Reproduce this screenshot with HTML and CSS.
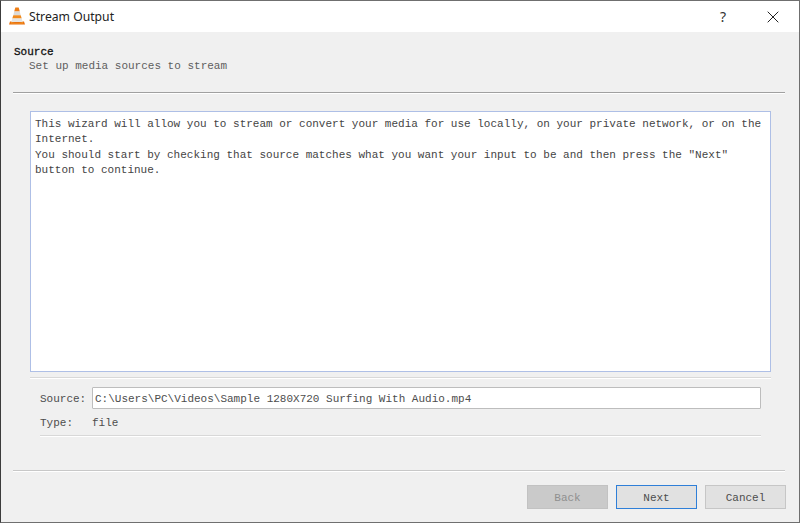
FILE: index.html
```html
<!DOCTYPE html>
<html lang="en">
<head>
    <meta charset="UTF-8">
    <title>Stream Output</title>
    <link rel="stylesheet" href="styles.css">
</head>
<body>
    <div class="window">
        <div class="titlebar">
            <svg class="app-icon" width="16" height="18" viewBox="0 0 16 18">
                <path d="M1 14.5h14l1 3H0z" fill="#e8710f"/>
                <path d="M6.300 .6h3.400l1.100 4H5.200z" fill="#ee7d14"/>
                <path d="M5.200 4.600h5.600l.9 3.600H4.300z" fill="#dcdad6"/>
                <path d="M4.300 8.200h7.400l1 3.300H3.300z" fill="#f08a1d"/>
                <path d="M3.300 11.500h9.400l1 3.500H2.300z" fill="#e6e4e0"/>
                <path d="M2.300 15c2 1.300 9.400 1.300 11.400 0l.6 1.500H1.700z" fill="#f59a2c"/>
            </svg>
            <span class="title">Stream Output</span>
            <span class="help">?</span>
            <svg class="close" width="12" height="12" viewBox="0 0 12 12">
                <path d="M.7 .7l10.600 10.600M11.300 .7L.7 11.300" stroke="#222" stroke-width="1" fill="none"/>
            </svg>
        </div>

        <div class="content">
            <div class="header">
                <h1>Source</h1>
                <p>Set up media sources to stream</p>
            </div>
            <div class="rule rule-dark"></div>

            <div class="page">
                <div class="intro">
                    This wizard will allow you to stream or convert your media for use locally, on your private network, or on the Internet.<br>
                    You should start by checking that source matches what you want your input to be and then press the "Next" button to continue.
                </div>
                <div class="rule rule-light rule-first"></div>

                <div class="source-info">
                    <div class="field">
                        <label for="source">Source:</label>
                        <input type="text" id="source" value="C:\Users\PC\Videos\Sample 1280X720 Surfing With Audio.mp4">
                    </div>
                    <div class="field field-type">
                        <span class="label">Type:</span>
                        <span>file</span>
                    </div>
                    <div class="rule rule-light"></div>
                </div>
            </div>

            <div class="rule rule-mid rule-bottom"></div>

            <div class="buttons">
                <button disabled>Back</button>
                <button class="default">Next</button>
                <button>Cancel</button>
            </div>
        </div>
    </div>
</body>
</html>
```

FILE: styles.css
```css
* {
    box-sizing: border-box;
}
body {
    margin: 0;
    background-color: #f0f0f0;
}
.window {
    width: 800px;
    height: 523px;
    display: flex;
    flex-direction: column;
    border: 1px solid #6f6f6f;
    border-left-color: #3c3c3c;
    background-color: #f0f0f0;
    font-family: "Liberation Mono", monospace;
    font-size: 11px;
    color: #4d4d4d;
}
.titlebar {
    height: 31px;
    display: flex;
    align-items: center;
    flex-shrink: 0;
    padding-left: 8px;
    background-color: white;
}
.app-icon {
    margin-right: 4px;
    margin-top: -1px;
}
.title {
    flex: 1;
    font-family: "Noto Sans", sans-serif;
    font-size: 12.2px;
    color: #222;
}
.help {
    font-family: "Noto Sans", sans-serif;
    font-size: 14px;
    color: #333;
    margin-right: 41px;
}
.close {
    margin-right: 20px;
}
.content {
    flex: 1;
    display: flex;
    flex-direction: column;
    padding: 0 14px 0 12px;
}
.header {
    padding-top: 13px;
    height: 60px;
}
h1 {
    margin: 0 0 0 1px;
    font-size: 11px;
    line-height: 14px;
    font-weight: normal;
    color: #111;
    -webkit-text-stroke: 0.3px #111;
}
p {
    margin: 0 0 0 16px;
    line-height: 15px;
    color: #5e5e5e;
}
.rule {
    height: 1px;
}
.rule-dark {
    background-color: #a0a0a0;
    box-shadow: 0 1px 0 #fff;
}
.rule-mid {
    background-color: #c8c8c8;
    box-shadow: 0 1px 0 #fff;
}
.rule-light {
    background-color: #d8d8d8;
    box-shadow: 0 1px 0 #fff;
}
.page {
    padding: 18px 14px 0 17px;
}
.intro {
    height: 261px;
    padding: 5px 4px;
    border: 1px solid #aebfe6;
    background-color: white;
    line-height: 15.4px;
    color: #444;
}
.rule-first {
    margin-top: 5px;
}
.source-info {
    padding: 9px 10px 0;
}
.field {
    display: flex;
    align-items: center;
}
label, .label {
    width: 52px;
    flex-shrink: 0;
}
label {
    padding-top: 1px;
}
input {
    flex: 1;
    height: 22px;
    padding: 1px 2px 0;
    border: 1px solid #bdbdbd;
    border-radius: 1px;
    background-color: white;
    font: inherit;
    color: #4d4d4d;
}
.field-type {
    height: 15px;
    margin: 6px 0 5px;
}
.rule-bottom {
    margin-top: 34px;
}
.buttons {
    display: flex;
    justify-content: flex-end;
    gap: 8px;
    margin-top: 14px;
    margin-right: -1px;
}
button {
    width: 81px;
    height: 24px;
    padding: 1px 0 0;
    border: 1px solid #c6c6c6;
    background-color: #e1e1e1;
    font: inherit;
    color: #4d4d4d;
}
button:disabled {
    background-color: #cacaca;
    border-color: #c2c2c2;
    color: #8f8f8f;
}
button.default {
    border-color: #2f7fd8;
}
```
